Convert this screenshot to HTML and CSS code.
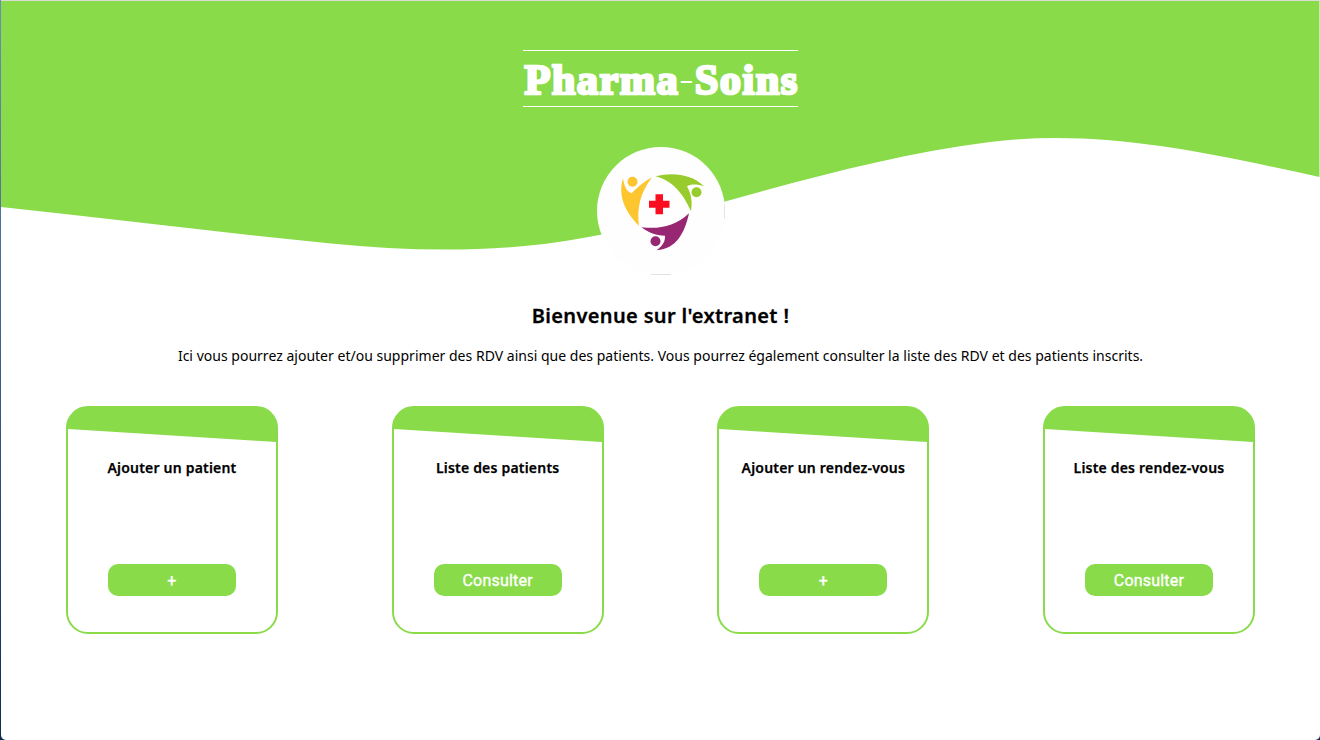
FILE: index.html
```html
<!DOCTYPE html>
<html lang="fr">
<head>
<meta charset="utf-8">
<title>Pharma-Soins</title>
<link rel="stylesheet" href="styles.css">
</head>
<body>
<div class="page">
  <header class="header">
    <svg class="wave" viewBox="0 0 1319 250" preserveAspectRatio="none" aria-hidden="true">
      <path d="M0 0H1318.500V176C1209 152 1099 127.300 989 141C879 155 769.500 188 659.500 218.500C550 252 440 253.500 330 242.500C220 231.500 110 218 0 206Z"/>
    </svg>
    <h1 class="brand">Pharma<span class="dash">-</span>Soins</h1>
    <div class="logo">
      <svg viewBox="0 0 128 128" role="img" aria-label="Pharma-Soins">
        <g transform="translate(.5 .3)">
        <g fill="#fdc62f"><circle cx="35" cy="34.500" r="5"/><path d="M25.500 31C27 42 31 45 34 46C40 40 47 34 54.500 30C43 45 39 61 41.500 78.500C28 65 20 49 25.500 31Z"/></g>
        <g fill="#98cb2c"><circle cx="99" cy="45" r="5"/><path d="M58 29C75 24.500 95 27 106.500 39C99 36.500 93 37 89.500 39C94 47 95 55 93.500 64C87 49 77 34 58 29Z"/></g>
        <g fill="#972673"><circle cx="58" cy="94" r="5"/><path d="M44 80C62 82 78 79 91.500 66C87 86 79 101.500 59 103C65 99 68 94 67.500 88.500C58 88 50 85 44 80Z"/></g>
        <path fill="#fc0d1f" d="M58 47H65.500V53.500H72V60.500H65.500V67H58V60.500H51.500V53.500H58Z"/>
        </g>
        <path d="M54 127.600H74M127.700 57V72" stroke="#d5d5d5" stroke-width=".8"/>
      </svg>
    </div>
  </header>
  <main>
    <h2 class="welcome">Bienvenue sur l'extranet !</h2>
    <p class="intro">Ici vous pourrez ajouter et/ou supprimer des RDV ainsi que des patients. Vous pourrez également consulter la liste des RDV et des patients inscrits.</p>
    <div class="cards">
      <section class="card"><h3 class="card-title">Ajouter un patient</h3><button class="button">+</button></section>
      <section class="card"><h3 class="card-title">Liste des patients</h3><button class="button">Consulter</button></section>
      <section class="card"><h3 class="card-title">Ajouter un rendez-vous</h3><button class="button">+</button></section>
      <section class="card"><h3 class="card-title">Liste des rendez-vous</h3><button class="button">Consulter</button></section>
    </div>
  </main>
</div>
</body>
</html>
```
FILE: styles.css
```css
* { box-sizing: border-box; }
body { margin: 0; background: linear-gradient(#6c91b8, #0c2c50); font-family: "Noto Sans", sans-serif; color: #000; }
.page { height: 740px; margin-left: 1px; border-top: 1px solid #d9ddd6; background: #fff; border-radius: 0 0 5px 5px; overflow: hidden; }
.header { position: relative; height: 274px; display: flex; flex-direction: column; align-items: center; padding-top: 49px; }
.wave { position: absolute; top: 0; left: 0; width: 1319px; height: 250px; fill: #89db4a; }
.brand { position: relative; display: flex; justify-content: center; margin: 0; width: 275px; height: 57px; padding-left: 2px; border: solid #fff; border-width: 1px 0; color: #fff; font: bold 42.5px/58px "Liberation Serif", serif; white-space: nowrap; -webkit-text-stroke: 2.6px #fff; letter-spacing: 1.4px; }
.dash { font-weight: 400; -webkit-text-stroke: 0; transform: scaleY(.6); }
.logo { position: relative; width: 128px; height: 128px; margin-top: 40px; border-radius: 50%; background: #fefefe; }
.logo svg { display: block; fill: none; }
.welcome { margin: 27px 0 0; font-size: 20px; line-height: 28px; font-weight: 600; letter-spacing: .36px; text-align: center; -webkit-text-stroke: .3px #000; }
.intro { margin: 16px 0 0; font-size: 14px; line-height: 20px; letter-spacing: .014px; text-align: center; white-space: nowrap; }
.cards { display: flex; justify-content: space-between; margin: 40px 65px 0; }
.card { width: 212px; height: 228px; border: 2px solid #89db4a; border-radius: 22px; background: linear-gradient(to bottom left, #89db4a calc(50% - .5px), #fff calc(50% + .5px)) 0 21px / 100% 13px no-repeat, linear-gradient(#89db4a 21px, #fff 21px); display: flex; flex-direction: column; align-items: center; }
.card-title { margin: 50px 0 0; font-size: 14px; line-height: 20px; font-weight: 600; letter-spacing: .2px; white-space: nowrap; -webkit-text-stroke: .25px #000; }
.button { margin-top: 86px; width: 128px; height: 32px; padding: 1px 0 0; border: 0; border-radius: 10px; background: #89db4a; color: #fff; font: 400 16px/31px Roboto, sans-serif; letter-spacing: .2px; -webkit-text-stroke: .35px #fff; }
```
